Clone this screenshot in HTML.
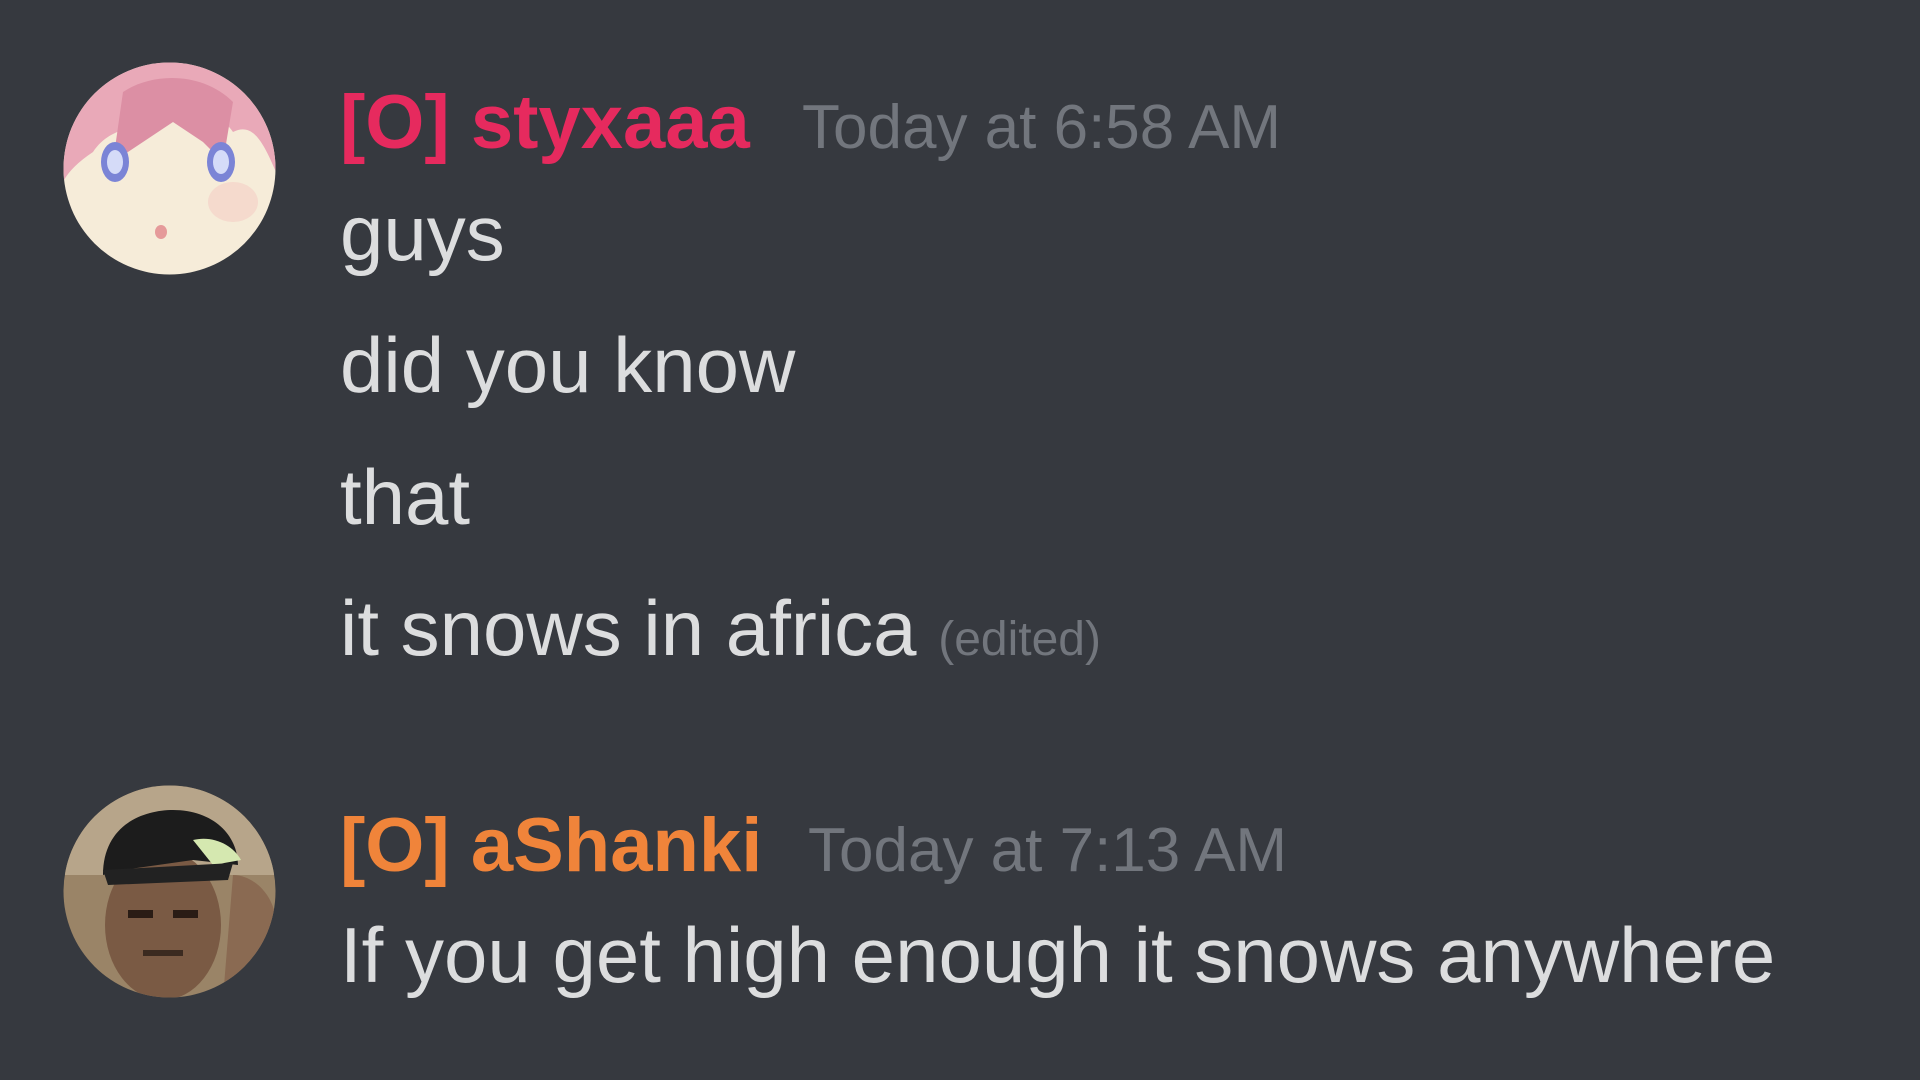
<!DOCTYPE html>
<html><head><meta charset="utf-8"><style>
html,body{margin:0;padding:0;width:1920px;height:1080px;background:#36393f;overflow:hidden;font-family:"Liberation Sans",sans-serif}
.t{position:absolute;white-space:nowrap;line-height:1}
.u{font-size:76px;font-weight:bold}
.ts{font-size:62px;color:#72767d}
.m{font-size:78px;color:#dcddde;left:340px}
</style></head><body>
<svg style="position:absolute;left:63px;top:62px" width="213" height="213" viewBox="0 0 213 213">
<defs><clipPath id="c1"><circle cx="106.5" cy="106.5" r="106"/></clipPath></defs>
<g clip-path="url(#c1)">
<rect width="213" height="213" fill="#f6ecd9"/>
<path d="M0 0H213V110C200 80 190 60 170 70 150 40 120 70 100 50 80 70 50 60 30 90 15 100 5 110 0 120Z" fill="#e9a9b8"/>
<path d="M60 30C90 10 140 10 170 40L160 100 140 80 110 60 80 80 50 100Z" fill="#dc8fa4"/>
<ellipse cx="52" cy="100" rx="14" ry="20" fill="#7b84d6"/>
<ellipse cx="52" cy="100" rx="8" ry="12" fill="#d5dbf8"/>
<ellipse cx="158" cy="100" rx="14" ry="20" fill="#7b84d6"/>
<ellipse cx="158" cy="100" rx="8" ry="12" fill="#d5dbf8"/>
<ellipse cx="98" cy="170" rx="6" ry="7" fill="#e59a9a"/>
<ellipse cx="170" cy="140" rx="25" ry="20" fill="#f3c8c2" opacity=".5"/>
</g></svg>
<div class="t u" style="left:340px;top:85px;color:#e62a5e">[O] styxaaa</div>
<div class="t ts" style="left:802px;top:97px">Today at 6:58 AM</div>
<div class="t m" style="top:194px">guys</div>
<div class="t m" style="top:326px">did you know</div>
<div class="t m" style="top:458px">that</div>
<div class="t m" style="top:589px">it snows in africa <span style="font-size:48px;color:#72767d">(edited)</span></div>

<svg style="position:absolute;left:63px;top:785px" width="213" height="213" viewBox="0 0 213 213">
<defs><clipPath id="c2"><circle cx="106.5" cy="106.5" r="106"/></clipPath></defs>
<g clip-path="url(#c2)">
<rect width="213" height="213" fill="#9a8467"/>
<rect x="0" y="0" width="213" height="90" fill="#b7a58a"/>
<ellipse cx="100" cy="140" rx="58" ry="75" fill="#7a5a44"/>
<path d="M40 90C40 40 80 25 110 25 150 25 175 50 175 80L130 75 60 85Z" fill="#1c1c1c"/>
<path d="M130 55C150 50 170 60 178 75L150 80Z" fill="#d5e8b0"/>
<path d="M40 85L170 78 165 95 45 100Z" fill="#222"/>
<rect x="65" y="125" width="25" height="8" fill="#2a1c15"/>
<rect x="110" y="125" width="25" height="8" fill="#2a1c15"/>
<rect x="80" y="165" width="40" height="6" fill="#3b2a20"/>
<path d="M170 90C190 90 213 110 213 140V213H160Z" fill="#8a6a52"/>
</g></svg>
<div class="t u" style="left:340px;top:808px;color:#f0843a">[O] aShanki</div>
<div class="t ts" style="left:808px;top:820px">Today at 7:13 AM</div>
<div class="t m" style="top:916px">If you get high enough it snows anywhere</div>
</body></html>
